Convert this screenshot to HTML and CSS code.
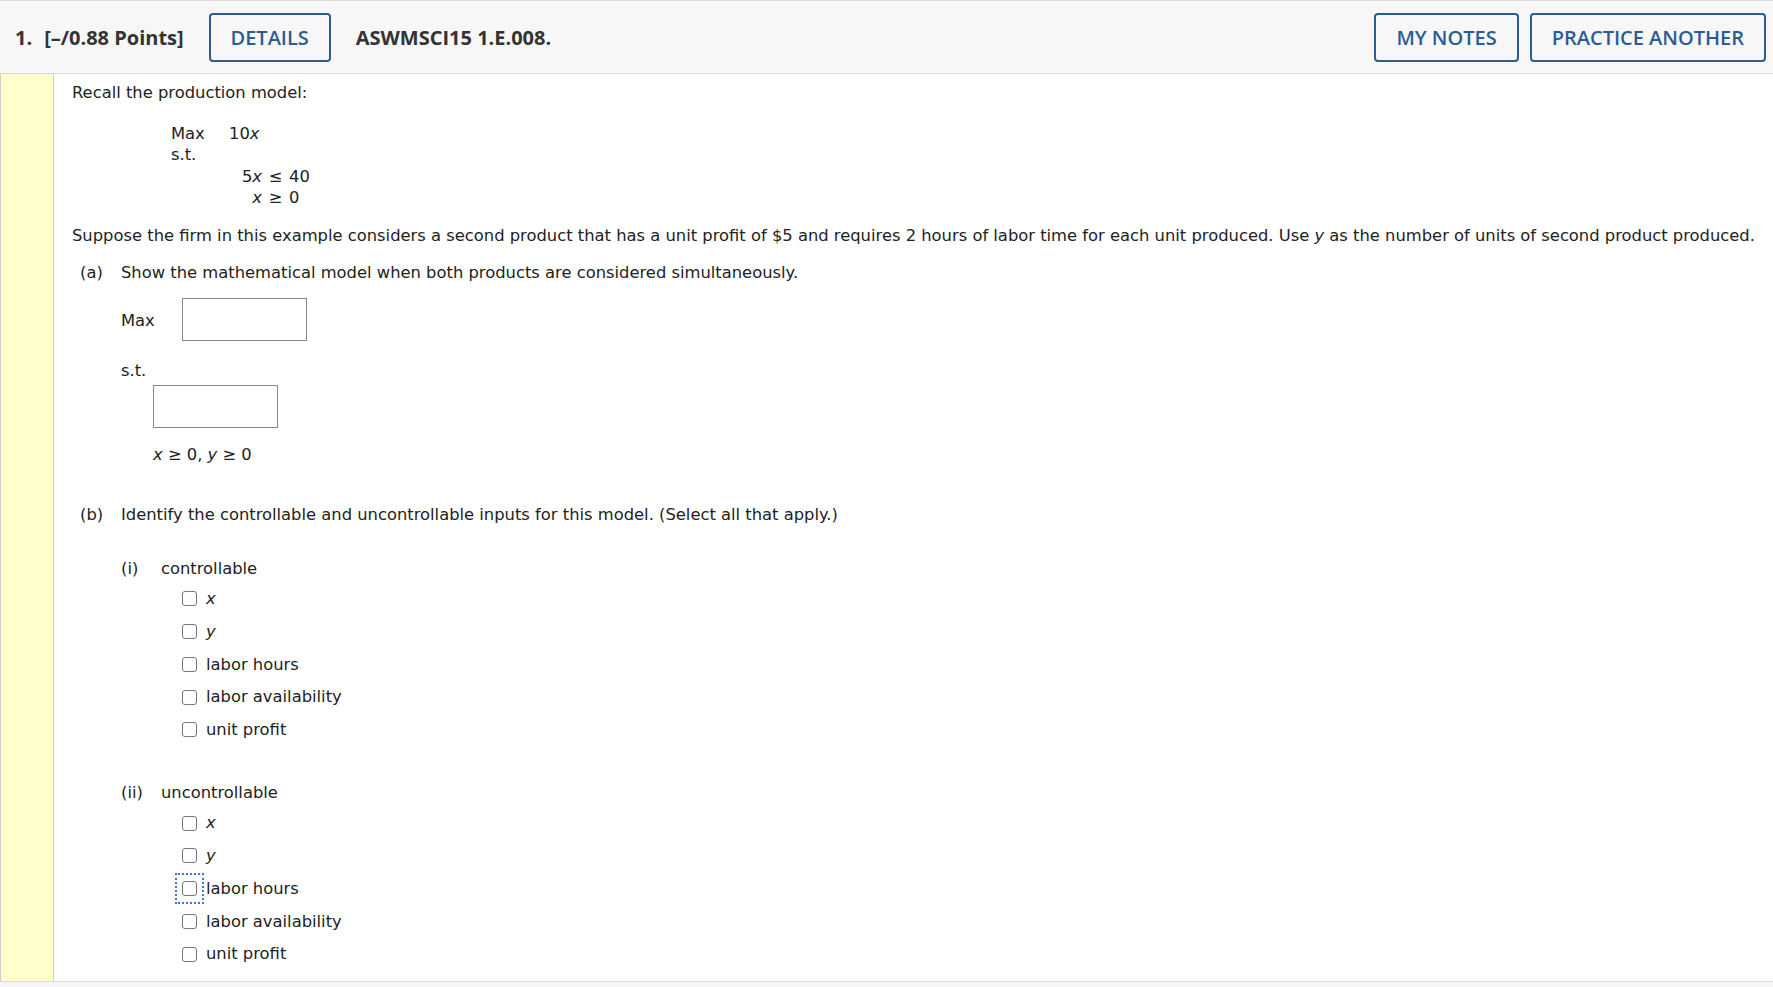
FILE: index.html
```html
<!DOCTYPE html>
<html>
<head>
<meta charset="utf-8">
<link rel="stylesheet" href="styles.css">
</head>
<body>
<div class="question">
  <div class="qhead">
    <div class="qnum"><span class="num">1.</span><span>[–/0.88 Points]</span></div>
    <button class="btn details">DETAILS</button>
    <div class="qid">ASWMSCI15 1.E.008.</div>
    <div class="spacer"></div>
    <button class="btn">MY NOTES</button>
    <button class="btn">PRACTICE ANOTHER</button>
  </div>
  <div class="qbody">
    <div class="side"></div>
    <div class="content">
      <p class="intro">Recall the production model:</p>
      <table class="model">
        <tr><td class="kw">Max</td><td colspan="3" class="obj">10<i>x</i></td></tr>
        <tr><td class="kw">s.t.</td><td colspan="3"></td></tr>
        <tr><td></td><td class="lhs">5<i>x</i></td><td class="rel">≤</td><td class="rhs">40</td></tr>
        <tr><td></td><td class="lhs"><i>x</i></td><td class="rel">≥</td><td class="rhs">0</td></tr>
      </table>
      <p class="prompt">Suppose the firm in this example considers a second product that has a unit profit of $5 and requires 2 hours of labor time for each unit produced. Use <i>y</i> as the number of units of second product produced.</p>

      <div class="part part-a">
        <div class="plabel">(a)</div>
        <div class="pbody">
          <div>Show the mathematical model when both products are considered simultaneously.</div>
          <div class="maxrow"><span class="maxlbl">Max</span><span class="box"></span></div>
          <div class="st">s.t.</div>
          <div class="strow"><span class="box"></span></div>
          <div class="nonneg"><i>x</i> ≥ 0, <i>y</i> ≥ 0</div>
        </div>
      </div>

      <div class="part part-b">
        <div class="plabel">(b)</div>
        <div class="pbody">
          <div>Identify the controllable and uncontrollable inputs for this model. (Select all that apply.)</div>
          <div class="sub first">
            <div class="slabel">(i)</div>
            <div class="sbody">
              <div>controllable</div>
              <ul class="choices">
                <li><span class="cb"></span><i>x</i></li>
                <li><span class="cb"></span><i>y</i></li>
                <li><span class="cb"></span>labor hours</li>
                <li><span class="cb"></span>labor availability</li>
                <li><span class="cb"></span>unit profit</li>
              </ul>
            </div>
          </div>
          <div class="sub second">
            <div class="slabel">(ii)</div>
            <div class="sbody">
              <div>uncontrollable</div>
              <ul class="choices">
                <li><span class="cb"></span><i>x</i></li>
                <li><span class="cb"></span><i>y</i></li>
                <li><span class="cb focused"></span>labor hours</li>
                <li><span class="cb"></span>labor availability</li>
                <li><span class="cb"></span>unit profit</li>
              </ul>
            </div>
          </div>
        </div>
      </div>
    </div>
  </div>
</div>
</body>
</html>
```

FILE: styles.css
```css
html, body {
  margin: 0;
  padding: 0;
  background: #f5f5f5;
}
body {
  font-family: "DejaVu Sans", Verdana, sans-serif;
  font-size: 16.35px;
  color: #222;
}
.question {
  background: #fff;
  border-bottom: 1px solid #dcdcdc;
}
.qhead {
  display: flex;
  align-items: center;
  height: 72px;
  padding: 0 7px 0 15px;
  background: #f7f7f7;
  border-top: 1px solid #dadada;
  border-bottom: 1px solid #dadada;
  font-family: "Open Sans", sans-serif;
  color: #333;
}
.qnum {
  font-size: 20px;
  font-weight: 700;
  display: flex;
  gap: 12px;
}
.qid {
  font-size: 20px;
  font-weight: 700;
  margin-left: 25px;
  color: #333;
}
.spacer { flex: 1; }
.btn {
  font-family: "Open Sans", sans-serif;
  font-size: 20px;
  font-weight: 600;
  color: #2b5d92;
  background: #f7f7f7;
  border: 2px solid #2b5d92;
  border-radius: 4px;
  height: 49px;
  padding: 0 20px;
  margin-left: 11px;
}
.btn.details {
  margin-left: 25px;
  width: 122px;
  padding: 0;
}
.qbody {
  display: flex;
}
.side {
  width: 52px;
  flex: none;
  background: #ffffcc;
  border-left: 1px solid #cfcfcf;
  border-right: 1px solid #cfcfcf;
}
.content {
  padding: 8px 0 10px 18px;
  line-height: 21.5px;
}
p { margin: 0; }
.model {
  border-collapse: collapse;
  margin: 19px 0 0 99px;
}
.model td { padding: 0; }
.model .kw { width: 58px; }
.model .lhs { text-align: right; width: 33px; }
.model .rel { text-align: center; width: 27px; }
.model .rhs { text-align: left; }
.prompt { margin-top: 16px; }
.part {
  display: flex;
  margin-left: 8px;
}
.part-a { margin-top: 16px; }
.part-b { margin-top: 38px; }
.plabel { width: 41px; flex: none; }
.maxrow {
  display: flex;
  align-items: center;
  margin-top: 14px;
}
.maxlbl { width: 61px; padding-top: 3px; }
.box {
  display: inline-block;
  width: 123px;
  height: 41px;
  border: 1px solid #888;
  background: #fff;
}
.st { margin-top: 19px; }
.strow { margin: 4px 0 0 32px; }
.strow .box { display: block; }
.nonneg { margin: 16px 0 0 32px; }
.sub { display: flex; }
.sub.first { margin-top: 33px; }
.sub.second { margin-top: 36px; }
.slabel { width: 40px; flex: none; }
.choices {
  list-style: none;
  margin: 3px 0 0 21px;
  padding: 0;
}
.choices li {
  display: flex;
  align-items: center;
  height: 32.75px;
}
.cb {
  position: relative;
  width: 13px;
  height: 13px;
  border: 1.5px solid #767676;
  border-radius: 3px;
  background: #fff;
  margin-right: 9px;
  flex: none;
}
.cb.focused::after {
  content: "";
  position: absolute;
  left: -8px;
  top: -9px;
  width: 25px;
  height: 27px;
  border: 2px dotted #3a78d8;
}
```
